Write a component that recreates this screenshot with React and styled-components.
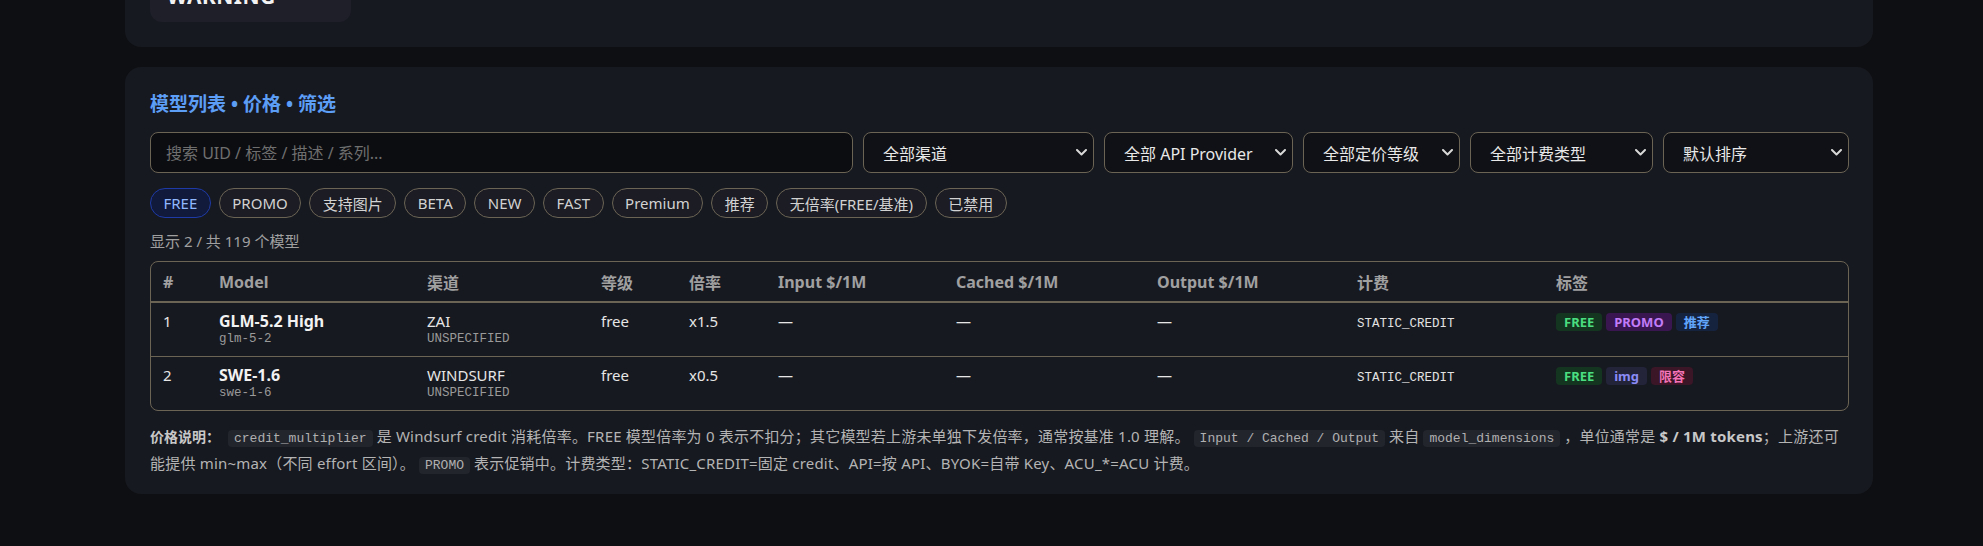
import styled, { createGlobalStyle } from "styled-components";

const GlobalStyle = createGlobalStyle`
  html, body {
    margin: 0;
    padding: 0;
    background: #0e0f12;
    color: #e6e6e6;
    font-family: "Noto Sans", "Noto Sans CJK SC", sans-serif;
    overflow: hidden;
  }
`;

const filters = [
  { label: "全部渠道", width: 231 },
  { label: "全部 API Provider", width: 189 },
  { label: "全部定价等级", width: 157 },
  { label: "全部计费类型", width: 183 },
  { label: "默认排序", width: 186 },
];
const chips = ["FREE", "PROMO", "支持图片", "BETA", "NEW", "FAST", "Premium", "推荐", "无倍率(FREE/基准)", "已禁用"];
const columns = [
  { title: "#", width: 56 },
  { title: "Model", width: 208 },
  { title: "渠道", width: 174 },
  { title: "等级", width: 88 },
  { title: "倍率", width: 89 },
  { title: "Input $/1M", width: 178 },
  { title: "Cached $/1M", width: 201 },
  { title: "Output $/1M", width: 200 },
  { title: "计费", width: 199 },
  { title: "标签" },
];
const models = [
  {
    idx: 1, name: "GLM-5.2 High", uid: "glm-5-2", channel: "ZAI", provider: "UNSPECIFIED",
    tier: "free", mult: "x1.5", billing: "STATIC_CREDIT",
    tags: [{ text: "FREE", kind: "free" }, { text: "PROMO", kind: "promo" }, { text: "推荐", kind: "rec" }],
  },
  {
    idx: 2, name: "SWE-1.6", uid: "swe-1-6", channel: "WINDSURF", provider: "UNSPECIFIED",
    tier: "free", mult: "x0.5", billing: "STATIC_CREDIT",
    tags: [{ text: "FREE", kind: "free" }, { text: "img", kind: "img" }, { text: "限容", kind: "limit" }],
  },
];

const tagColors = {
  free: { bg: "#143520", fg: "#4ade80" },
  promo: { bg: "#3a1650", fg: "#c27cf8" },
  rec: { bg: "#16233f", fg: "#60a5fa" },
  img: { bg: "#23233a", fg: "#8b8cf6" },
  limit: { bg: "#3a1627", fg: "#f472b6" },
};

const Page = styled.div`
  width: 1748px;
  padding-left: 125px;
  display: flex;
  flex-direction: column;
  gap: 20px;
`;

const Card = styled.section`
  background: #171920;
  border-radius: 16px;
  padding: 24px 24px 16px 25px;
`;

const TopCard = styled(Card)`
  margin-top: -74px;
  padding-bottom: 25px;
`;

const StatBox = styled.div`
  width: 201px;
  box-sizing: border-box;
  background: #1e1f29;
  border-radius: 12px;
  padding: 14px 17px 15px;
  display: flex;
  flex-direction: column;
  gap: 6px;
`;

const StatLabel = styled.div`
  font-size: 13px;
  line-height: 16px;
  color: #9a9a9a;
`;

const StatValue = styled.div`
  font-size: 21px;
  line-height: 1;
  font-weight: 700;
  color: #f2f2f2;
  letter-spacing: 0.5px;
`;

const Title = styled.h2`
  margin: 0;
  font-size: 19px;
  line-height: 26px;
  font-weight: 700;
  color: #5c9df6;
`;

const Toolbar = styled.div`
  display: flex;
  gap: 10px;
  margin-top: 15px;
  height: 41px;
`;

const Search = styled.input`
  flex: 1;
  min-width: 0;
  box-sizing: border-box;
  height: 41px;
  background: #0c0d11;
  border: 1px solid #6b6455;
  border-radius: 8px;
  padding: 0 15px;
  font: inherit;
  font-size: 16px;
  color: #e6e6e6;
  outline: none;
  &::placeholder {
    color: #6f6f6f;
  }
`;

const Select = styled.div`
  box-sizing: border-box;
  height: 41px;
  flex: none;
  display: flex;
  align-items: center;
  justify-content: space-between;
  background: #101116;
  border: 1px solid #6b6455;
  border-radius: 8px;
  padding: 0 6px 0 19px;
  font-size: 16px;
  color: #e8e8e8;
  white-space: nowrap;
`;

const ChipRow = styled.div`
  display: flex;
  gap: 8px;
  margin-top: 15px;
`;

const Chip = styled.span`
  box-sizing: border-box;
  height: 30px;
  display: inline-flex;
  align-items: center;
  padding: 0 12.5px;
  border-radius: 15px;
  font-size: 15px;
  white-space: nowrap;
  border: 1px solid ${(p) => (p.$active ? "#1e3aa6" : "#6b6455")};
  background: ${(p) => (p.$active ? "#111a3a" : "#1b1c24")};
  color: ${(p) => (p.$active ? "#8fb8ff" : "#d2d2d2")};
`;

const Count = styled.div`
  margin-top: 14px;
  font-size: 15px;
  line-height: 18px;
  color: #a0a0a0;
`;

const TableWrap = styled.div`
  margin-top: 11px;
  border: 1px solid #6b6455;
  border-radius: 8px;
  overflow: hidden;
`;

const Table = styled.table`
  width: 100%;
  border-collapse: collapse;
  table-layout: fixed;
`;

const Th = styled.th`
  height: 39px;
  padding: 0 12px;
  text-align: left;
  font-size: 16px;
  font-weight: 700;
  color: #a0a0a0;
  border-bottom: 2px solid #6b6455;
`;

const Tr = styled.tr`
  & + & td {
    border-top: 1px solid #6b6455;
  }
`;

const Td = styled.td`
  padding: 8px 12px 9px;
  vertical-align: top;
  font-size: 15px;
  line-height: 20px;
  color: #e6e6e6;
`;

const Name = styled.div`
  font-size: 16px;
  font-weight: 700;
  color: #f2f2f2;
`;

const Sub = styled.div`
  font-family: "Liberation Mono", "DejaVu Sans Mono", monospace;
  font-size: 12.5px;
  line-height: 16px;
  color: #9a9a9a;
`;

const Mono = styled.span`
  font-family: "Liberation Mono", "DejaVu Sans Mono", monospace;
  font-size: 12.5px;
  color: #e2e2e2;
`;

const Tags = styled.div`
  display: flex;
  gap: 4px;
  padding-top: 2px;
`;

const Tag = styled.span`
  height: 18px;
  display: inline-flex;
  align-items: center;
  padding: 0 8px;
  border-radius: 4px;
  font-size: 13px;
  font-weight: 700;
  background: ${(p) => tagColors[p.$kind].bg};
  color: ${(p) => tagColors[p.$kind].fg};
`;

const Note = styled.p`
  margin: 13px 0 0;
  font-size: 15px;
  line-height: 24px;
  letter-spacing: 0.2px;
  color: #b4b4b4;
  strong {
    color: #c8c8c8;
  }
`;

const Label = styled.strong`
  font-size: 14px;
  letter-spacing: 0;
  margin-right: 4px;
`;

const Code = styled.code`
  font-family: "Liberation Mono", "DejaVu Sans Mono", monospace;
  font-size: 13px;
  letter-spacing: 0;
  background: #23252d;
  color: #b0b0b0;
  border-radius: 4px;
  padding: 1px 6px;
  margin: 0 4px;
`;

const Chevron = () => (
  <svg width="11" height="7" viewBox="0 0 11 7" fill="none">
    <polyline points="1,1 5.5,5.5 10,1" stroke="#d8d8d8" strokeWidth="2" strokeLinecap="round" strokeLinejoin="round" />
  </svg>
);

export default function App() {
  return (
    <>
      <GlobalStyle />
      <Page>
        <TopCard>
          <StatBox>
            <StatLabel>状态</StatLabel>
            <StatValue>WARNING</StatValue>
          </StatBox>
        </TopCard>

        <Card>
          <Title>模型列表 • 价格 • 筛选</Title>

          <Toolbar>
            <Search placeholder="搜索 UID / 标签 / 描述 / 系列..." />
            {filters.map((f) => (
              <Select key={f.label} style={{ width: f.width }}>
                {f.label}
                <Chevron />
              </Select>
            ))}
          </Toolbar>

          <ChipRow>
            {chips.map((c, i) => (
              <Chip key={c} $active={i === 0}>{c}</Chip>
            ))}
          </ChipRow>

          <Count>显示 2 / 共 119 个模型</Count>

          <TableWrap>
            <Table>
              <colgroup>
                {columns.map((c) => (
                  <col key={c.title} style={c.width ? { width: c.width } : undefined} />
                ))}
              </colgroup>
              <thead>
                <tr>
                  {columns.map((c) => (
                    <Th key={c.title}>{c.title}</Th>
                  ))}
                </tr>
              </thead>
              <tbody>
                {models.map((m) => (
                  <Tr key={m.uid}>
                    <Td>{m.idx}</Td>
                    <Td>
                      <Name>{m.name}</Name>
                      <Sub>{m.uid}</Sub>
                    </Td>
                    <Td>
                      {m.channel}
                      <Sub>{m.provider}</Sub>
                    </Td>
                    <Td>{m.tier}</Td>
                    <Td>{m.mult}</Td>
                    <Td>—</Td>
                    <Td>—</Td>
                    <Td>—</Td>
                    <Td><Mono>{m.billing}</Mono></Td>
                    <Td>
                      <Tags>
                        {m.tags.map((t) => (
                          <Tag key={t.text} $kind={t.kind}>{t.text}</Tag>
                        ))}
                      </Tags>
                    </Td>
                  </Tr>
                ))}
              </tbody>
            </Table>
          </TableWrap>

          <Note>
            <Label>价格说明：</Label>
            <Code>credit_multiplier</Code>是 Windsurf credit 消耗倍率。FREE 模型倍率为 0 表示不扣分；其它模型若上游未单独下发倍率，通常按基准 1.0 理解。
            <Code>Input / Cached / Output</Code>来自<Code>model_dimensions</Code>，单位通常是 <strong>$ / 1M tokens</strong>；上游还可能提供 min~max（不同 effort 区间）。
            <Code>PROMO</Code>表示促销中。计费类型：STATIC_CREDIT=固定 credit、API=按 API、BYOK=自带 Key、ACU_*=ACU 计费。
          </Note>
        </Card>
      </Page>
    </>
  );
}
